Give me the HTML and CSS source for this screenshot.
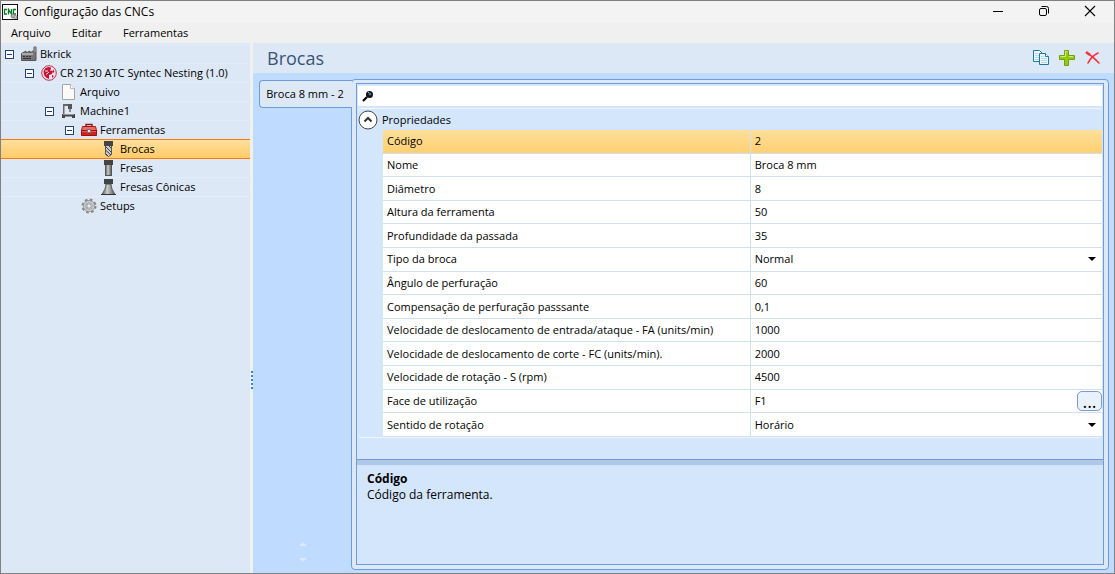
FILE: index.html
```
<!doctype html>
<html lang="pt-BR">
<head>
	<meta charset="UTF-8">
	<title>Configuração das CNCs</title>
	<link rel="stylesheet" href="styles.css">
</head>
<body>
<div class="window">
	<header class="titlebar">
		<svg class="app-icon" width="16" height="16" viewBox="0 0 16 16">
			<rect x=".5" y=".5" width="15" height="15" fill="#fff" stroke="#111"/>
			<path d="M5 5.500H2.500v4.500H5M6.500 10.500V5.500L9.500 10V5M14 5.500h-2.500V10H14" fill="none" stroke="#0a7a22" stroke-width="1.300"/>
			<circle cx="11" cy="12" r="2" fill="#bbb" stroke="#777"/><circle cx="13.500" cy="13" r="1.500" fill="#ccc" stroke="#888"/>
		</svg>
		<h1>Configuração das CNCs</h1>
		<div class="win-buttons">
			<button type="button" aria-label="Minimizar"><svg width="12" height="12"><path d="M1 6.500h10" stroke="#000"/></svg></button>
			<button type="button" aria-label="Restaurar"><svg width="12" height="12" fill="none" stroke="#000"><rect x="1.500" y="3.500" width="7" height="7" rx="1.500"/><path d="M3.500 1.500h5a2 2 0 0 1 2 2v5"/></svg></button>
			<button type="button" aria-label="Fechar"><svg width="12" height="12"><path d="M1 1l10 10M11 1L1 11" stroke="#000" stroke-width="1.100"/></svg></button>
		</div>
	</header>
	<nav class="menubar">
		<button type="button">Arquivo</button>
		<button type="button">Editar</button>
		<button type="button">Ferramentas</button>
	</nav>
	<div class="main">
		<ul class="tree">
			<li class="node level1">
				<button class="toggle" type="button" aria-label="Recolher"></button>
				<svg class="icon" width="16" height="16" viewBox="0 0 16 16">
					<path d="M.5 14.500v-7L5 5v2l4-2v2l3-2h1V1h2v13.500z" fill="#777" stroke="#555"/>
					<path d="M1 8h11" stroke="#ddd"/><path d="M2 10.500h2m1 0h2m1 0h2M2 12.500h8" stroke="#333"/><path d="M14 0v6" stroke="#aaa"/>
				</svg>
				<a href="#">Bkrick</a>
			</li>
			<li class="node level2">
				<button class="toggle" type="button" aria-label="Recolher"></button>
				<svg class="icon" width="16" height="16" viewBox="0 0 16 16">
					<circle cx="8" cy="8" r="7.300" fill="#f4e5eb" stroke="#c0304c"/>
					<path d="M7.500 2L4.500 3 2.500 6l.5 4 2 2.500 3 1.500V10l3-1 1-3-2-1V2.500z" fill="#c61235"/>
					<path d="M11 10l2 1-2 2zM12 4l1.500 3-1.500 1z" fill="#c61235"/>
					<path d="M4 6h3M5 9.500l3-2.500M9 5h2" stroke="#f4e5eb"/>
				</svg>
				<a href="#">CR 2130 ATC Syntec Nesting (1.0)</a>
			</li>
			<li class="node level3">
				<span class="toggle-space"></span>
				<svg class="icon" width="16" height="16" viewBox="0 0 16 16">
					<path d="M1.500.5h8l4 4v11h-12z" fill="#fafafa" stroke="#a5a5a5"/>
					<path d="M9.500.5v4h4" fill="#fff" stroke="#bbb"/>
				</svg>
				<a href="#">Arquivo</a>
			</li>
			<li class="node level3">
				<button class="toggle" type="button" aria-label="Recolher"></button>
				<svg class="icon" width="16" height="16" viewBox="0 0 16 16">
					<path d="M3 11V2h8" fill="none" stroke="#666" stroke-width="2"/>
					<path d="M3.500 3v8" stroke="#aaa"/><rect x="7" y="1" width="4" height="5" fill="#555"/><path d="M9 6v3" stroke="#333"/>
					<path d="M1 11h13v4h-3v-1.500H4V15H1z" fill="#444"/><path d="M2 11.500h11" stroke="#999"/>
				</svg>
				<a href="#">Machine1</a>
			</li>
			<li class="node level4">
				<button class="toggle" type="button" aria-label="Recolher"></button>
				<svg class="icon" width="16" height="16" viewBox="0 0 16 16">
					<path d="M5 5V2.500h6V5" fill="none" stroke="#8f1515" stroke-width="1.400"/>
					<path d="M1.500 4.500h13l1 4h-15z" fill="#ef6a60" stroke="#a51616"/>
					<path d="M.5 8.500h15v5h-15z" fill="#cf2323" stroke="#9c1010"/>
					<path d="M1 9.500h14" stroke="#e0605a"/><rect x="6.500" y="7.500" width="3" height="3" fill="#eee" stroke="#777"/>
				</svg>
				<a href="#">Ferramentas</a>
			</li>
			<li class="node level5 selected">
				<span class="toggle-space"></span>
				<svg class="icon" width="16" height="16" viewBox="0 0 16 16">
					<path d="M4.500 4.500h6v9l-3 2-3-2z" fill="#ccc" stroke="#555"/>
					<path d="M5 6l5 5M5 9.500l5 4.500M8 5l2 2M5 13l2 2" stroke="#444"/>
					<rect x="3" y="0" width="9" height="5" fill="#444"/>
				</svg>
				<a href="#">Brocas</a>
			</li>
			<li class="node level5">
				<span class="toggle-space"></span>
				<svg class="icon" width="16" height="16" viewBox="0 0 16 16">
					<defs><linearGradient id="steel"><stop offset="0" stop-color="#555"/><stop offset=".4" stop-color="#ccc"/><stop offset="1" stop-color="#555"/></linearGradient></defs>
					<rect x="4.500" y="4.500" width="6" height="11" fill="url(#steel)" stroke="#555"/>
					<rect x="3" y="0" width="9" height="5" fill="#444"/>
				</svg>
				<a href="#">Fresas</a>
			</li>
			<li class="node level5">
				<span class="toggle-space"></span>
				<svg class="icon" width="16" height="16" viewBox="0 0 16 16">
					<path d="M5 5h5c0 4 2 7 4 10.500H1C3 12 5 9 5 5z" fill="url(#steel)" stroke="#555"/>
					<path d="M0 15.500h15" stroke="#333"/><rect x="3" y="0" width="9" height="5" fill="#444"/>
				</svg>
				<a href="#">Fresas Cônicas</a>
			</li>
			<li class="node level4">
				<span class="toggle-space"></span>
				<svg class="icon" width="16" height="16" viewBox="0 0 16 16">
					<circle cx="8" cy="8" r="6.300" fill="none" stroke="#888" stroke-width="2.400" stroke-dasharray="2.600 2.350"/>
					<circle cx="8" cy="8" r="4.400" fill="none" stroke="#8c8c8c" stroke-width="3"/>
					<circle cx="8" cy="8" r="4.400" fill="none" stroke="#ccc" stroke-width="1.800"/>
					<circle cx="8" cy="8" r="2.200" fill="#e4ecf6" stroke="#888" stroke-width=".8"/>
				</svg>
				<a href="#">Setups</a>
			</li>
		</ul>
		<div class="splitter"><span class="grip"></span></div>
		<section class="content">
			<div class="content-head">
				<h2>Brocas</h2>
				<div class="tools">
					<button type="button" aria-label="Duplicar">
						<svg width="16" height="16" viewBox="0 0 16 16">
							<path d="M.5.5h6l3 3v8h-9z" fill="#eaf5fc" stroke="#1979a8"/><path d="M2 3.500h3M2 5.500h5M2 7.500h5M2 9.500h5" stroke="#b5d9ea"/>
							<path d="M6.500 3.500h6l3 3v8h-9z" fill="#eaf5fc" stroke="#1979a8"/><path d="M12.500 3.500v3h3" fill="#fff" stroke="#1979a8"/><path d="M8 6.500h3M8 8.500h6M8 10.500h6M8 12.500h6" stroke="#b5d9ea"/>
						</svg>
					</button>
					<button type="button" aria-label="Adicionar">
						<svg width="16" height="16" viewBox="0 0 16 16"><path d="M5.500.500h4v5h6v4h-6v6h-4v-6h-5v-4h5z" fill="#95c90c" stroke="#6da012"/><path d="M6.500 6.500V1.500h2M1.500 6.500h5M10 6.500h4" fill="none" stroke="#d4ef80"/></svg>
					</button>
					<button type="button" aria-label="Excluir">
						<svg width="16" height="16" viewBox="0 0 16 16"><path d="M2 3c4 2 8 6 12 10M13 3C9 5 5 9 3 13" fill="none" stroke="#f5303a" stroke-width="1.600" stroke-linecap="round"/><path d="M1 2l4 3" stroke="#f5303a" stroke-width="2.500"/></svg>
					</button>
				</div>
			</div>
			<div class="tabs">
				<div class="tab-list">
					<button class="tab" type="button">Broca 8 mm - 2</button>
					<div class="scrollers">
						<button type="button" aria-label="Subir"><svg width="8" height="4"><path d="M0 4l4-4 4 4z" fill="#dfe9f7"/></svg></button>
						<button type="button" aria-label="Descer"><svg width="8" height="4"><path d="M0 0h8L4 4z" fill="#dfe9f7"/></svg></button>
					</div>
				</div>
				<div class="panel">
					<div class="grid-box">
						<label class="search">
							<svg width="12" height="12" viewBox="0 0 12 12"><path d="M1 11l4-4" stroke="#000" stroke-width="2.200"/><circle cx="7.500" cy="4.500" r="3.500" fill="#111"/><circle cx="8" cy="4" r="1.500" fill="#4b6f86"/><path d="M6 3l1-1" stroke="#bbb"/></svg>
							<input type="text" aria-label="Pesquisar">
						</label>
						<div class="group">
							<button class="group-head" type="button">
								<svg width="20" height="20" viewBox="0 0 20 20" fill="none"><circle cx="10" cy="10" r="9" fill="#fff" stroke="#444"/><path d="M6.500 11.500L10 8l3.500 3.500" stroke="#333" stroke-width="2"/></svg>
								Propriedades
							</button>
							<table class="props">
								<tr class="current"><th><label for="codigo">Código</label></th><td><input id="codigo" type="text" value="2"></td></tr>
								<tr><th><label for="nome">Nome</label></th><td><input id="nome" type="text" value="Broca 8 mm"></td></tr>
								<tr><th><label for="diametro">Diâmetro</label></th><td><input id="diametro" type="text" value="8"></td></tr>
								<tr><th><label for="altura">Altura da ferramenta</label></th><td><input id="altura" type="text" value="50"></td></tr>
								<tr><th><label for="passada">Profundidade da passada</label></th><td><input id="passada" type="text" value="35"></td></tr>
								<tr><th><label for="tipo">Tipo da broca</label></th><td><div class="field"><select id="tipo"><option>Normal</option></select><span class="arrow"></span></div></td></tr>
								<tr><th><label for="angulo">Ângulo de perfuração</label></th><td><input id="angulo" type="text" value="60"></td></tr>
								<tr><th><label for="compensacao">Compensação de perfuração passsante</label></th><td><input id="compensacao" type="text" value="0,1"></td></tr>
								<tr><th><label for="fa">Velocidade de deslocamento de entrada/ataque - FA (units/min)</label></th><td><input id="fa" type="text" value="1000"></td></tr>
								<tr><th><label for="fc">Velocidade de deslocamento de corte - FC (units/min).</label></th><td><input id="fc" type="text" value="2000"></td></tr>
								<tr><th><label for="rpm">Velocidade de rotação - S (rpm)</label></th><td><input id="rpm" type="text" value="4500"></td></tr>
								<tr><th><label for="face">Face de utilização</label></th><td><div class="field"><input id="face" type="text" value="F1"><button class="more" type="button">...</button></div></td></tr>
								<tr><th><label for="sentido">Sentido de rotação</label></th><td><div class="field"><select id="sentido"><option>Horário</option></select><span class="arrow"></span></div></td></tr>
							</table>
						</div>
						<div class="description">
							<h3>Código</h3>
							<p>Código da ferramenta.</p>
						</div>
					</div>
				</div>
			</div>
		</section>
	</div>
</div>
</body>
</html>
```
FILE: styles.css
```
*{box-sizing:border-box;}
html,body{height:100%;}
body,h1,h2,h3,p,ul{margin:0;padding:0;}
body,button,input,select{font:11px/16px "Segoe UI", "Open Sans", sans-serif;color:#000;}
h1,h2,h3,th{font-weight:normal;}
button{margin:0;padding:0;border:0;background:none;}
svg{display:block;flex:none;}
a{color:#000;text-decoration:none;}

.window{display:flex;flex-direction:column;min-height:100%;border:1px solid #808080;background:#f0f0f0;}
/* title and menu */
.titlebar{display:flex;align-items:center;height:22px;padding-left:1px;background:#f3f3f3;}
.titlebar h1{flex:1;padding-left:6px;font-size:12px;}
.win-buttons{display:flex;padding-right:1px;}
.win-buttons button{display:flex;justify-content:center;width:46px;padding-bottom:2px;}
.menubar{display:flex;gap:21px;height:20px;padding-left:10px;}
/* tree */
.main{display:flex;flex:1;}
.tree{width:249px;padding-top:1px;background:#dde8f6;list-style:none;}
.node{display:flex;align-items:center;height:19px;border-top:1px solid #e3edf9;white-space:nowrap;}
.node .icon{margin:0 3px 0 6px;}
.level1{padding-left:4px;}
.level2{padding-left:24px;}
.level3{padding-left:44px;}
.level4{padding-left:64px;}
.level5{padding-left:84px;}
.toggle,.toggle-space{width:10px;flex:none;}
.toggle{height:9px;width:9px;margin-right:1px;border:1px solid #24426f;background:linear-gradient(#24426f,#24426f) center/5px 1px no-repeat #fff;}
.selected{height:20px;margin-bottom:-1px;position:relative;border-top:1px solid #f57c0a;border-bottom:1px solid #f57c0a;background:linear-gradient(#ffe0a0,#ffcb66);}
.splitter{display:flex;flex-direction:column;align-items:flex-end;width:3px;background:#f0f0f0;}
.splitter:before{content:"";flex:9;}
.splitter:after{content:"";flex:5;}
.grip{width:2px;height:20px;background:repeating-linear-gradient(#2e86e0 0 2px,transparent 2px 4px);}
/* content */
.content{display:flex;flex:1;flex-direction:column;min-width:0;background:#bfdbff;}
.content-head{display:flex;align-items:center;justify-content:space-between;height:30px;padding:0 13px 0 14px;background:#dde8f6;}
.content-head h2{font-size:18px;line-height:24px;color:#3b5475;}
.tools{display:flex;gap:10px;}
.tabs{display:flex;flex:1;padding:6px 5px 3px 6px;}
.tab-list{display:flex;flex-direction:column;justify-content:space-between;width:93px;}
.tab{position:relative;z-index:1;height:28px;margin-top:1px;padding-right:2px;border:1px solid #6f9bd8;border-right:0;border-radius:4px 0 0 4px;background:#dde8f6;white-space:nowrap;}
.scrollers{display:flex;flex-direction:column;align-items:center;gap:12px;padding:0 5px 8px 0;}
.panel{display:flex;flex:1;min-width:0;padding:3px 4px 4px;border:1px solid #6f9bd8;border-radius:4px;background:#dde8f6;margin-left:-1px;}
.grid-box{display:flex;flex:1;flex-direction:column;min-width:0;border:1px solid #6f9bd8;background:#d4e6fc;}
.search{display:flex;align-items:center;height:20px;margin:2px 1px;padding-left:4px;background:#fff;}
.search input{flex:1;border:0;outline:0;}
.group{margin:0 1px;border:1px solid #eff6ff;border-width:1px 0;border-radius:4px;}
.group-head{display:flex;align-items:center;gap:4px;height:21px;}
.props{width:calc(100% - 25px);height:307px;margin-left:25px;border-collapse:separate;border-spacing:0;table-layout:fixed;background:#fff;}
.props th,.props td{padding:0 4px;border-bottom:1px solid #cfe0f5;text-align:left;}
.props th{width:51%;}
.props td{padding-right:0;border-left:1px solid #cfe0f5;}
.props input,.props select{display:block;width:100%;height:16px;padding:0;border:0;outline:0;background:none;appearance:none;}
.current{background:linear-gradient(#ffdf9b,#ffcf70);}
.field{display:flex;align-items:center;height:16px;}
.arrow{flex:none;margin-right:6px;border:4px solid transparent;border-top-color:#000;border-bottom:0;}
.more{flex:none;width:25px;height:20px;border:1px solid #7d9cc4;border-radius:5px;background:#e9f1fc;font-size:18px;}
.description{flex:1;margin-top:21px;padding:6px 10px;border-top:1px solid #6f9bd8;background:linear-gradient(#b0c7e8,#b0c7e8) top/100% 5px no-repeat;}
.description h3{padding-top:5px;font-weight:bold;}
.description h3,.description p{font-size:12px;}
```
